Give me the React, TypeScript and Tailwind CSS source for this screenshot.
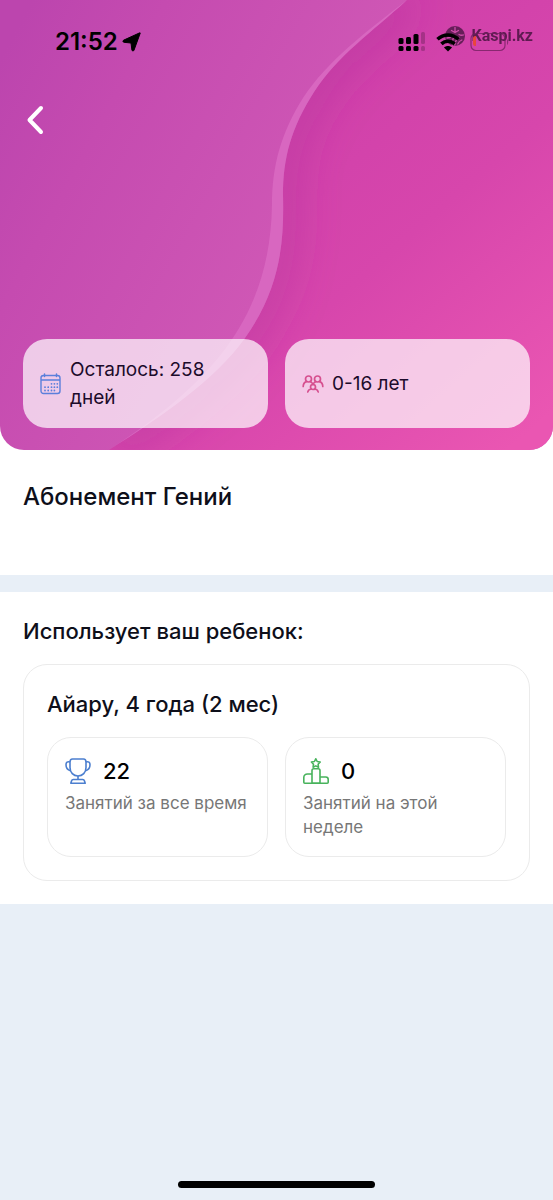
import type { ReactNode } from "react";

const children = [
  { name: "Айару", age: "4 года (2 мес)", total: 22, week: 0 },
];

function HeaderWave() {
  return (
    <svg
      aria-hidden="true"
      className="absolute inset-0 h-full w-full"
      fill="none"
      preserveAspectRatio="none"
      viewBox="0 0 553 450"
    >
      <defs>
        <linearGradient
          gradientUnits="userSpaceOnUse"
          id="wave-left"
          x1="0"
          x2="300"
          y1="60"
          y2="220"
        >
          <stop stopColor="#bc45ae" />
          <stop offset="0.35" stopColor="#c54bb0" />
          <stop offset="1" stopColor="#cf57b5" />
        </linearGradient>
        <linearGradient
          gradientUnits="userSpaceOnUse"
          id="wave-right"
          x1="250"
          x2="520"
          y1="130"
          y2="440"
        >
          <stop stopColor="#cf40aa" />
          <stop offset="0.45" stopColor="#d746ac" />
          <stop offset="1" stopColor="#ea56b2" />
        </linearGradient>
        <filter height="140%" id="wave-soft" width="160%" x="-30%" y="-20%">
          <feGaussianBlur stdDeviation="20" />
        </filter>
        <clipPath id="wave-clip">
          <path d="M407 0C372 32 338 55 314 92C291 128 283 158 283 195C284 238 282 286 245 338C215 380 162 416 109 450H553V0Z" />
        </clipPath>
      </defs>
      <rect fill="url(#wave-left)" height="450" width="553" />
      <g clipPath="url(#wave-clip)">
        <rect fill="url(#wave-right)" height="450" width="553" />
        <path
          d="M407 0C372 32 338 55 314 92C291 128 283 158 283 195C284 238 282 286 245 338C215 380 162 416 109 450"
          filter="url(#wave-soft)"
          stroke="#a92f98"
          strokeOpacity="0.5"
          strokeWidth="24"
        />
      </g>
      <path
        d="M407 0C372 32 338 55 314 92C291 128 283 158 283 195C284 238 282 286 245 338C215 380 162 416 109 450C155 420 197 387 226 348C258 304 271 258 272 205C272 166 281 133 303 98C328 60 366 32 407 0Z"
        fill="#d867c0"
      />
    </svg>
  );
}

function LocationIcon() {
  return (
    <svg aria-hidden="true" className="h-5 w-5" viewBox="0 0 20 20">
      <path
        d="M18.2 1.2 12 18.2c-.4 1.1-1.9 1-2.1-.2L9 11 2 10.300C.7 10.200.6 8.600 1.800 8.100L17.300 1c.6-.3 1.100-.2.9.2Z"
        fill="#000"
        stroke="#000"
        strokeLinejoin="round"
      />
    </svg>
  );
}

function SignalIcon() {
  return (
    <svg aria-hidden="true" className="h-5 w-7" viewBox="0 0 28 20">
      <g fill="#000">
        <rect height="6" rx="1.500" width="5" x="0.500" y="6" />
        <rect height="7" rx="1.500" width="5" x="8" y="5" />
        <rect height="10" rx="1.500" width="5" x="15.500" y="2" />
        <rect height="5" rx="1.500" width="5" x="0.500" y="14" />
        <rect height="5" rx="1.500" width="5" x="8" y="14" />
        <rect height="5" rx="1.500" width="5" x="15.500" y="14" />
      </g>
      <g fill="#000" opacity="0.2">
        <rect height="12" rx="1.500" width="4" x="23" y="0" />
        <rect height="5" rx="1.500" width="4" x="23" y="14" />
      </g>
    </svg>
  );
}

function WifiIcon() {
  return (
    <svg aria-hidden="true" className="h-5 w-6" fill="none" viewBox="0 0 24 20">
      <g stroke="#000" strokeWidth="3.600">
        <path d="M1.500 7.300C7.500 1.500 16.500 1.500 22.500 7.300" />
        <path d="M5.400 11.900C9.200 8.400 14.800 8.400 18.600 11.900" />
      </g>
      <path
        d="M12 19.500 8 15.500C10.300 13.500 13.700 13.500 16 15.500Z"
        fill="#000"
      />
    </svg>
  );
}

function BatteryIcon() {
  return (
    <svg aria-hidden="true" className="h-5 w-10" fill="none" viewBox="0 0 40 20">
      <rect
        height="17"
        rx="5"
        stroke="#6f1f5c"
        strokeOpacity="0.75"
        strokeWidth="1.200"
        width="34"
        x="1"
        y="1.500"
      />
      <path d="M37 7c1.600.8 1.600 5.200 0 6Z" fill="#6f1f5c" opacity="0.7" />
      <path
        d="M5.500 4H6V14H5.500A2.500 2.500 0 0 1 3 11.500V6.500A2.500 2.500 0 0 1 5.500 4Z"
        fill="#e8463c"
      />
    </svg>
  );
}

function GlobeIcon() {
  return (
    <svg aria-hidden="true" className="h-5 w-5" viewBox="0 0 20 20">
      <circle cx="10" cy="10" fill="#3b1038" r="10" />
      <g fill="none" stroke="#d050ab" strokeLinecap="round" strokeWidth="1.300">
        <path d="M10 6.500V1.500M10 6.500 6.500 4.500M10 6.500l3.500-2" />
        <path d="M7.500 19c-.5-4 .3-7 2.500-9.500M9.800 19c.4-3.500 1.700-6 4.200-7.500M12.800 18c.8-2 2-3.300 4-4" />
        <path d="M14 8.500c1.300.8 2.800 1 4.500.5M2 12c2 0 3.500-.7 4.500-2" />
      </g>
    </svg>
  );
}

function CalendarIcon() {
  return (
    <svg
      aria-hidden="true"
      className="h-[22px] w-[22px] shrink-0"
      fill="none"
      stroke="#5b7fdb"
      viewBox="0 0 22 22"
    >
      <rect height="18" rx="2.500" strokeWidth="1.400" width="19" x="1" y="2.500" />
      <path d="M1 7H20" strokeWidth="1.400" />
      <path d="M4.500 1V3.500M16.500 1V3.500" strokeLinecap="round" strokeWidth="1.500" />
      <path
        d="M11.500 10.800h.01M14.400 10.800h.01M17.300 10.800h.01M5 14.200h.01M8.200 14.200h.01M11.500 14.200h.01M14.400 14.200h.01M17.300 14.200h.01M5 17.500h.01M8.200 17.500h.01M11.500 17.500h.01M14.400 17.500h.01"
        strokeLinecap="round"
        strokeWidth="1.800"
      />
    </svg>
  );
}

function GroupIcon() {
  return (
    <svg
      aria-hidden="true"
      className="h-[22px] w-[22px] shrink-0"
      fill="none"
      stroke="#d6508f"
      strokeLinecap="round"
      strokeWidth="1.700"
      viewBox="0 0 22 22"
    >
      <circle cx="6.500" cy="6" r="3" />
      <circle cx="15.500" cy="6" r="3" />
      <path d="M1.200 13.500C1.200 10.800 2.500 9.300 4.500 8.600M20.800 13.500C20.800 10.800 19.500 9.300 17.500 8.600M8.200 8.600C9.500 9.300 10.500 10.300 11 11.500M13.800 8.600C12.500 9.300 11.500 10.300 11 11.500" />
      <circle cx="11" cy="14" r="2.500" />
      <path d="M5.800 19C6 17.400 7.300 16.400 9.300 16M16.200 19C16 17.400 14.700 16.400 12.700 16" />
    </svg>
  );
}

function TrophyIcon() {
  return (
    <svg
      aria-hidden="true"
      className="h-[26px] w-[26px] shrink-0"
      fill="none"
      stroke="#4c7fcf"
      strokeLinejoin="round"
      strokeWidth="1.600"
      viewBox="0 0 26 26"
    >
      <path d="M7.500 1H18.500C20 1 21 2.300 21 4V9.500C21 14.500 17.600 18 13 18C8.400 18 5 14.500 5 9.500V4C5 2.300 6 1 7.500 1Z" />
      <path d="M5 4C2.500 3.200 1 4.300 1 6.800C1 9.900 2.600 12 5.500 12.700M21 4C23.500 3.200 25 4.300 25 6.800C25 9.900 23.400 12 20.500 12.700" />
      <path d="M13 18V21.500M8.300 21.500H17.700C18.700 21.500 19.200 22 19.500 23L20.200 25.200H5.800L6.500 23C6.800 22 7.300 21.500 8.300 21.500Z" />
    </svg>
  );
}

function PodiumIcon() {
  return (
    <svg
      aria-hidden="true"
      className="h-[26px] w-[26px] shrink-0"
      fill="none"
      stroke="#48b35c"
      strokeLinejoin="round"
      strokeWidth="1.600"
      viewBox="0 0 26 26"
    >
      <path d="m12.800.8 1.400 2.700 3 .5-2.100 2.200.4 3-2.700-1.300-2.700 1.300.4-3L8.400 4l3-.5Z" />
      <path d="M9 25.200V12.500C9 11.400 9.700 10.800 10.700 10.800H15.300C16.300 10.800 17 11.400 17 12.500V25.200Z" />
      <path d="M9 16H4.500C2.200 16 .8 17.500.8 19.500V24.200C.8 24.900 1.100 25.200 1.800 25.200H24.200C24.900 25.200 25.200 24.900 25.200 24.200V21.500C25.200 20 24.200 19 22.700 19H17" />
    </svg>
  );
}

function StatusBar() {
  return (
    <div className="flex h-6 items-center justify-between pr-5 pl-8">
      <div className="flex items-center gap-1">
        <span className="text-2xl leading-6 font-semibold text-black">
          21:52
        </span>
        <LocationIcon />
      </div>
      <div className="flex items-center gap-2.5">
        <SignalIcon />
        <WifiIcon />
        <BatteryIcon />
      </div>
    </div>
  );
}

function Chip({ icon, label }: { icon: ReactNode; label: string }) {
  return (
    <div className="flex min-h-[89px] items-center gap-2 rounded-3xl bg-white/70 px-[17px] py-4">
      {icon}
      <span className="text-[19px] leading-7 text-[#1c0b2b]">{label}</span>
    </div>
  );
}

function StatCard({
  icon,
  value,
  label,
}: {
  icon: ReactNode;
  value: number;
  label: string;
}) {
  return (
    <div className="rounded-3xl border border-[#ebebeb] p-[17px]">
      <div className="flex h-8 items-center gap-3">
        {icon}
        <span className="text-[22px] font-medium text-black">{value}</span>
      </div>
      <p className="mt-1 text-[17px] leading-6 text-[#777]">{label}</p>
    </div>
  );
}

export default function App() {
  return (
    <div className="flex min-h-screen flex-col bg-[#e8eff7] font-['Inter','Liberation_Sans',sans-serif] text-[#0e0f1a]">
      <div className="bg-white">
        <header className="relative overflow-hidden rounded-b-3xl">
          <HeaderWave />
          <div className="absolute top-6 right-5 flex items-center gap-1.5 font-['Roboto',sans-serif] opacity-70">
            <GlobeIcon />
            <span className="text-base font-bold text-[#2d0a2b]">Kaspi.kz</span>
          </div>
          <div className="relative px-[23px] pt-[30px] pb-[22px]">
            <StatusBar />
            <button
              aria-label="Назад"
              className="mt-12 flex h-9 w-6 items-center justify-center"
              type="button"
            >
              <svg
                aria-hidden="true"
                className="h-8 w-5"
                fill="none"
                stroke="#fff"
                strokeLinecap="round"
                strokeLinejoin="round"
                strokeWidth="4"
                viewBox="0 0 20 32"
              >
                <path d="M16 4 4.500 16 16 28" />
              </svg>
            </button>
            <div className="mt-[201px] grid grid-cols-2 gap-[17px]">
              <Chip icon={<CalendarIcon />} label="Осталось: 258 дней" />
              <Chip icon={<GroupIcon />} label="0-16 лет" />
            </div>
          </div>
        </header>
        <h1 className="px-[23px] pt-[29px] pb-[60px] text-2xl leading-9 font-medium">
          Абонемент Гений
        </h1>
      </div>

      <main className="mt-[17px] bg-white p-[23px]">
        <h2 className="text-[22px] leading-8 font-medium">
          Использует ваш ребенок:
        </h2>
        {children.map((child) => (
          <section
            className="mt-[17px] rounded-3xl border border-[#ebebeb] p-[23px]"
            key={child.name}
          >
            <h3 className="text-[22px] leading-8 font-medium">
              {child.name}, {child.age}
            </h3>
            <div className="mt-[17px] grid grid-cols-2 gap-[17px]">
              <StatCard
                icon={<TrophyIcon />}
                label="Занятий за все время"
                value={child.total}
              />
              <StatCard
                icon={<PodiumIcon />}
                label="Занятий на этой неделе"
                value={child.week}
              />
            </div>
          </section>
        ))}
      </main>

      <div className="mt-auto flex justify-center pb-3">
        <div className="h-[7px] w-[197px] rounded-full bg-black" />
      </div>
    </div>
  );
}
